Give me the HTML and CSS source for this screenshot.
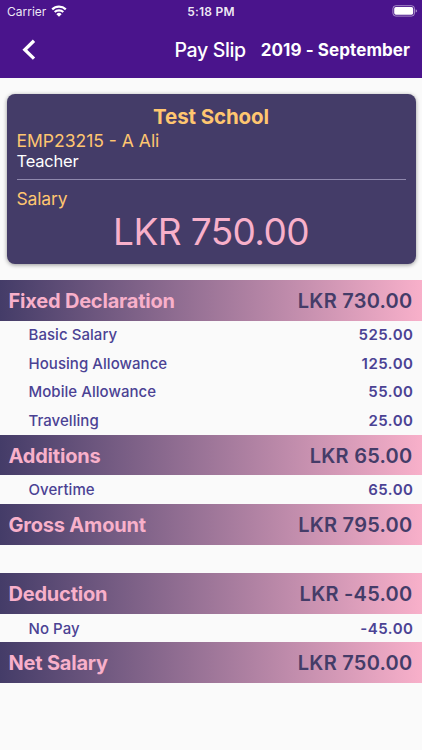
FILE: index.html
```html
<!DOCTYPE html>
<html lang="en">
<head>
    <meta charset="UTF-8">
    <meta name="viewport" content="width=device-width, initial-scale=1.0">
    <title>Pay Slip</title>
    <link rel="stylesheet" href="styles.css">
</head>
<body>

    <!-- Status bar -->
    <div class="status-bar">
        <div class="carrier">
            <span>Carrier</span>
            <svg class="wifi" viewBox="0 0 16 12" width="16" height="12">
                <path d="M1.2 4.4 A9.7 9.7 0 0 1 14.8 4.4" fill="none" stroke="#fff" stroke-width="2.2"/>
                <path d="M3.7 7.1 A6.1 6.1 0 0 1 12.3 7.1" fill="none" stroke="#fff" stroke-width="2.1"/>
                <path d="M8 11.7 L5.4 9.2 A3.6 3.6 0 0 1 10.6 9.2 Z" fill="#fff"/>
            </svg>
        </div>
        <div class="clock">5:18 PM</div>
        <div class="battery">
            <svg viewBox="0 0 26 12" width="26" height="12">
                <rect x="0.9" y="0.7" width="21.6" height="10.4" rx="3" fill="none" stroke="#fff" stroke-opacity="0.5"/>
                <rect x="2.2" y="2" width="19" height="7.8" rx="1.7" fill="#fff"/>
                <path d="M23.7 4.3 Q25 4.8 25 5.9 Q25 7 23.7 7.5 Z" fill="#fff" fill-opacity="0.55"/>
            </svg>
        </div>
    </div>

    <!-- App bar -->
    <div class="app-bar">
        <svg class="back" viewBox="0 0 14 22" width="14" height="22">
            <path d="M12 1.8 L2.8 10.7 L12 19.6" fill="none" stroke="#fff" stroke-width="3.3"/>
        </svg>
        <div class="title">Pay Slip</div>
        <div class="period">2019 - September</div>
    </div>

    <!-- Employee card -->
    <div class="card">
        <h1 class="school">Test School</h1>
        <p class="employee">EMP23215 - A Ali</p>
        <p class="role">Teacher</p>
        <hr>
        <p class="salary-label">Salary</p>
        <p class="salary">LKR 750.00</p>
    </div>

    <!-- Salary breakdown -->
    <div class="bar"><span>Fixed Declaration</span><span class="amount">LKR 730.00</span></div>
    <div class="row"><span>Basic Salary</span><span class="value">525.00</span></div>
    <div class="row"><span>Housing Allowance</span><span class="value">125.00</span></div>
    <div class="row"><span>Mobile Allowance</span><span class="value">55.00</span></div>
    <div class="row"><span>Travelling</span><span class="value">25.00</span></div>
    <div class="bar"><span>Additions</span><span class="amount">LKR 65.00</span></div>
    <div class="row"><span>Overtime</span><span class="value">65.00</span></div>
    <div class="bar gross"><span>Gross Amount</span><span class="amount">LKR 795.00</span></div>
    <div class="bar"><span>Deduction</span><span class="amount">LKR -45.00</span></div>
    <div class="row"><span>No Pay</span><span class="value">-45.00</span></div>
    <div class="bar"><span>Net Salary</span><span class="amount">LKR 750.00</span></div>

</body>
</html>
```
FILE: styles.css
```css
* {
    box-sizing: border-box;
}
body {
    margin: 0;
    height: 750px;
    overflow: hidden;
    background-color: #fafafa;
    font-family: Inter, "Liberation Sans", sans-serif;
}
p, h1 {
    margin: 0;
}

/* Header */
.status-bar {
    display: grid;
    grid-template-columns: 1fr auto 1fr;
    align-items: center;
    height: 22px;
    padding: 0 4px 0 7px;
    background-color: #4a148c;
    color: rgba(255, 255, 255, 0.92);
    font-size: 12px;
}
.carrier {
    display: flex;
    align-items: center;
    gap: 5px;
}
.clock {
    margin-right: 3px;
    font-weight: 600;
    letter-spacing: 0.25px;
}
.battery {
    display: flex;
    justify-content: flex-end;
}
.app-bar {
    display: flex;
    align-items: center;
    height: 55.5px;
    padding: 0 12px 0 22px;
    background-color: #4a148c;
    color: #fff;
    white-space: nowrap;
}
.title {
    margin-left: auto;
    font-size: 19.5px;
    font-weight: 500;
    letter-spacing: -0.35px;
}
.period {
    margin-left: 15px;
    font-size: 17px;
    font-weight: 700;
    letter-spacing: 0.08px;
}

/* Employee card */
.card {
    height: 170px;
    margin: 16.5px 6.5px 16px;
    padding: 10px;
    background-color: #443c68;
    border-radius: 8px;
    box-shadow: 0 1px 4px rgba(0, 0, 0, 0.4);
    color: #ffc670;
    white-space: nowrap;
}
.school {
    font-size: 20.5px;
    line-height: 26px;
    font-weight: 700;
    letter-spacing: -0.12px;
    text-align: center;
}
.employee {
    font-size: 17.5px;
    line-height: 21px;
}
.role {
    color: #fff;
    font-size: 16.5px;
    line-height: 21px;
    letter-spacing: -0.2px;
}
.card hr {
    height: 1px;
    margin: 7px 0 8px;
    border: none;
    background-color: #8f88ad;
}
.salary-label {
    font-size: 17.5px;
    line-height: 21px;
    letter-spacing: -0.15px;
}
.salary {
    color: #f8b0ca;
    font-size: 37px;
    line-height: 46px;
    letter-spacing: -0.6px;
    text-align: center;
}

/* Breakdown */
.bar {
    display: flex;
    justify-content: space-between;
    align-items: center;
    height: 40.7px;
    padding: 1px 9.5px 0 8.5px;
    background: linear-gradient(to right, #443c68, #f8b0ca);
    color: #f8b0ca;
    font-size: 20px;
    font-weight: 700;
    letter-spacing: -0.2px;
}
.amount {
    color: #443c68;
    font-weight: 600;
    letter-spacing: 0.25px;
}
.gross {
    margin-bottom: 28.5px;
}
.row {
    display: flex;
    justify-content: space-between;
    align-items: center;
    height: 28.5px;
    padding: 0 8.5px 0 28.5px;
    color: #4b4294;
    font-size: 15px;
    font-weight: 500;
    letter-spacing: 0.05px;
}
.value {
    font-weight: 600;
    letter-spacing: 0.5px;
}
```
